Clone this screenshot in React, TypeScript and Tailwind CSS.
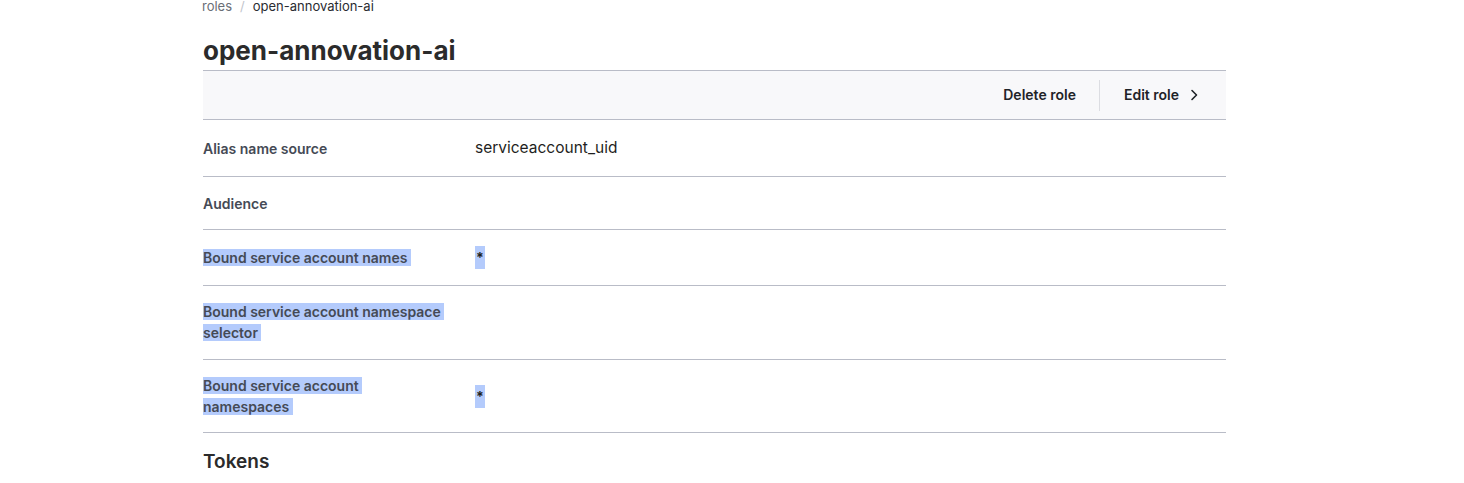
import React from "react";

const SEL = "bg-[#b4cbfc]";

type Row = {
  label: string[];
  value?: string;
  selected?: boolean;
  valueLeading?: string;
  extra?: string;
};

const rows: Row[] = [
  { label: ["Alias name source"], value: "serviceaccount_uid", valueLeading: "leading-[26px]" },
  { label: ["Audience"] },
  { label: ["Bound service account names"], value: "*", selected: true, valueLeading: "leading-[25px]" },
  { label: ["Bound service account namespace", "selector"], selected: true, extra: "pb-[16px]" },
  { label: ["Bound service account", "namespaces"], value: "*", selected: true },
];

function Chevron() {
  return (
    <svg width="16" height="16" viewBox="0 0 16 16" fill="none" className="text-[#1f2328]">
      <path d="M6 3.5L10.5 8L6 12.5" stroke="currentColor" strokeWidth="1.6" strokeLinecap="round" strokeLinejoin="round" />
    </svg>
  );
}

export default function App() {
  return (
    <div
      className="min-h-[483px] bg-white overflow-hidden"
      style={{ fontFamily: "Inter, 'Noto Sans', sans-serif" }}
    >
      <div className="ml-[203px] w-[1023px]">
        <nav className="-mt-[4px] -ml-[1px] flex items-center gap-[8px] text-[13px] leading-[20px]">
          <span className="text-[#6a6e76]">roles</span>
          <span className="text-[#c2c5cc]">/</span>
          <span className="text-[#2a2c31]">open-annovation-ai</span>
        </nav>
        <h1 className="mt-[17px] mb-[1px] text-[26px] leading-[36px] font-bold text-[#2b2b2b]">
          open-annovation-ai
        </h1>
        <div className="flex h-[50px] items-center justify-end border-y border-[#b9bcc7] bg-[#f8f8fa]">
          <button className="pl-[25px] pr-[23px] pb-[1px] text-[14px] font-semibold text-[#1f2328]">Delete role</button>
          <div className="h-[31px] w-px bg-[#dcdde2]" />
          <button className="flex items-center gap-[7px] pl-[24px] pr-[24px] pb-[1px] text-[14px] font-semibold text-[#1f2328]">
            Edit role
            <Chevron />
          </button>
        </div>
        {rows.map((r, i) => (
          <div key={i} className={`flex items-center border-b border-[#b9bcc7] py-[15px] ${r.extra ?? ""}`}>
            <div className="w-[272px] shrink-0 min-h-[22px] flex flex-col justify-center text-[14px] leading-[21px] font-semibold text-[#454a55]">
              {r.label.map((l, j) => (
                <div key={j}>
                  <span className={`whitespace-pre ${r.selected ? SEL : ""}`}>
                    {r.selected ? l + " " : l}
                  </span>
                </div>
              ))}
            </div>
            {r.value && (
              <div className={`text-[15.5px] ${r.valueLeading ?? "leading-[23px]"} text-[#1f1f22]`}>
                {r.selected ? (
                  <span className={`${SEL} inline-block px-[1px] text-[14px] font-bold leading-[23px]`}>{r.value}</span>
                ) : (
                  r.value
                )}
              </div>
            )}
          </div>
        ))}
        <h2 className="mt-[15px] text-[19px] leading-[28px] font-semibold text-[#2b2b2b]">Tokens</h2>
      </div>
    </div>
  );
}
